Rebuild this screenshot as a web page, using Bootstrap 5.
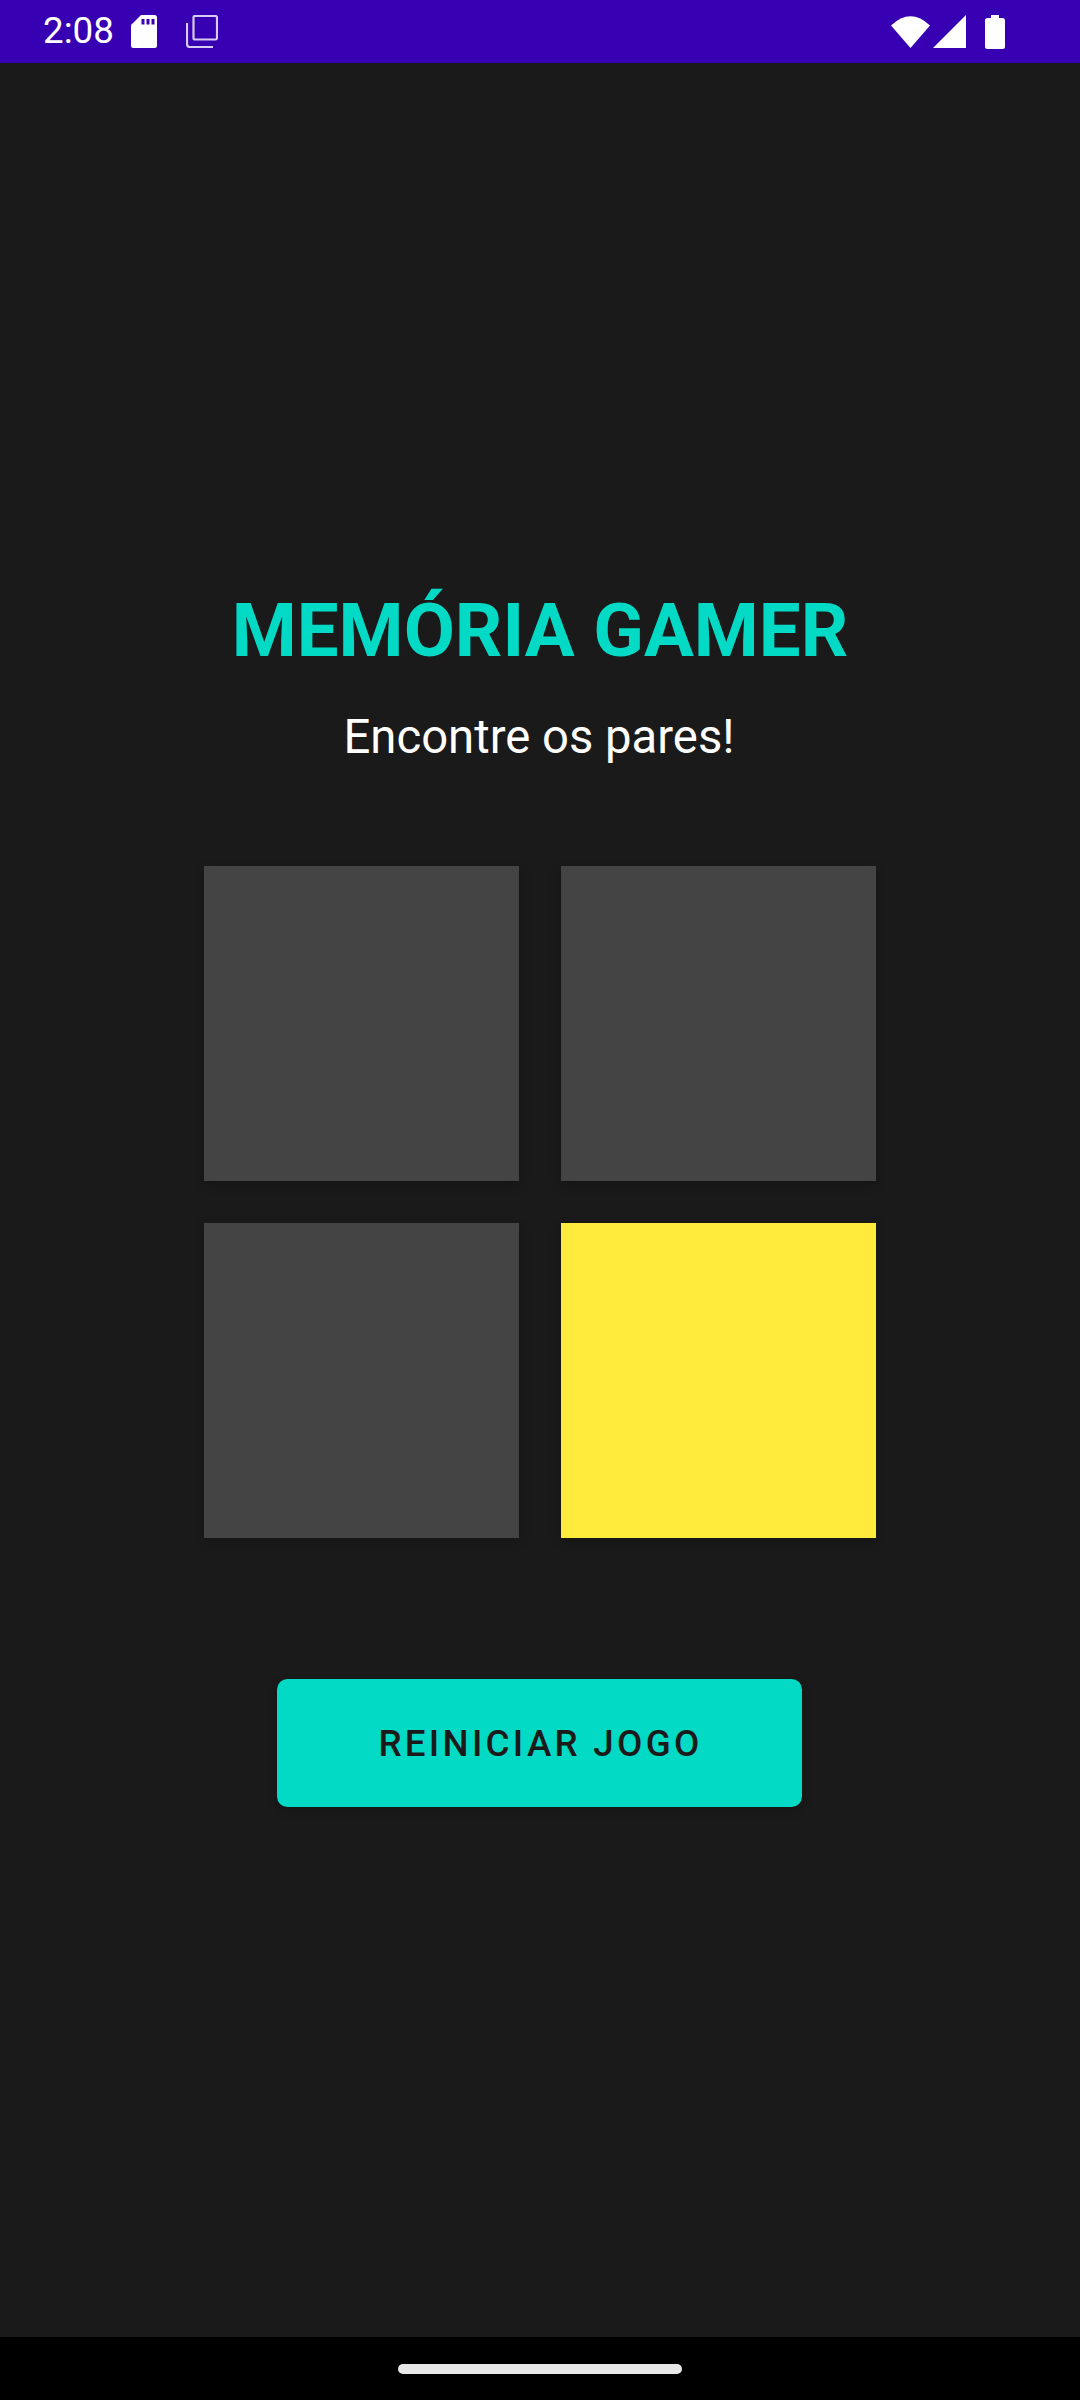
<!DOCTYPE html>
<html lang="pt">
<head>
<meta charset="utf-8">
<title>Memória Gamer</title>
<link href="https://cdn.jsdelivr.net/npm/bootstrap@5.3.0/dist/css/bootstrap.min.css" rel="stylesheet">
<style>
html,body{margin:0;height:2400px;overflow:hidden;background:#1a1a1a;font-family:Roboto,"Liberation Sans",sans-serif}
.app-shell{height:2400px}
.status-strip{height:63px;background:#3700b3;color:#fff;padding:0 75px 0 43px}
.clock{font-size:36.75px;line-height:1;margin-right:17px;letter-spacing:0}
.ico{display:block;fill:#fff;flex:none}
.ico-fade{opacity:.8;margin-left:29px}
.ico-sig{margin-left:3px}
.ico-bat{margin-left:19px}
.game-area{background:#1a1a1a;padding-top:525px}
.game-title{font-size:74.3px;font-weight:700;color:#03dac6;line-height:86px;margin:0}
.game-sub{font-size:47.25px;font-weight:400;color:#fff;line-height:56px;margin:35px 2px 0 0}
.board{margin-top:101px;gap:42px}
.board-row{gap:42px}
.tile{width:315px;height:315px;background:#444;box-shadow:0 3px 10px rgba(0,0,0,.22)}
.tile-on{background:#ffeb3b}
.restart{width:525px;height:128px;margin-top:141px;margin-right:1px;padding:3px 0 0 2px;background:#03dac6;border:0;border-radius:10.5px;color:#1a1a1a;font-size:36.75px;font-weight:500;letter-spacing:3.28px;line-height:1;box-shadow:0 3px 10px rgba(0,0,0,.2)}
.restart:hover,.restart:active{background:#03dac6!important;color:#1a1a1a!important}
.nav-strip{height:63px;background:#000}
.home-pill{width:284px;height:10px;border-radius:5px;background:#e8e8e8;margin-top:27px}
</style>
</head>
<body>
<div class="app-shell d-flex flex-column">
  <div class="status-strip d-flex align-items-center flex-shrink-0">
    <span class="clock">2:08</span>
    <svg class="ico" width="26" height="33" viewBox="0 0 26 33"><path fill-rule="evenodd" d="M10 0H23.5A2.5 2.5 0 0 1 26 2.5V30.5A2.5 2.5 0 0 1 23.5 33H2.5A2.5 2.5 0 0 1 0 30.5V10ZM10.5 4V9.5H13.5V4ZM15.5 4V9.5H18.5V4ZM20.5 4V9.5H23.5V4Z"/></svg>
    <svg class="ico ico-fade" width="32" height="33" viewBox="0 0 32 33" fill="none"><path d="M7.5 2.500A1.500 1.500 0 0 1 9 1H29.500A1.500 1.500 0 0 1 31 2.500V23A1.500 1.500 0 0 1 29.500 24.500H9A1.500 1.500 0 0 1 7.500 23Z" style="fill:none;stroke:#fff;stroke-width:2.200"/><path d="M1 8V29A3 3 0 0 0 4 32H27" style="fill:none;stroke:#fff;stroke-width:2.200"/></svg>
    <div class="flex-grow-1"></div>
    <svg class="ico" width="39" height="32" viewBox="0 0 39 32"><path d="M0 9.500Q19.500 -9 39 9.500L19.500 32Z"/></svg>
    <svg class="ico ico-sig" width="33" height="33" viewBox="0 0 33 33"><path d="M33 0V33H0Z"/></svg>
    <svg class="ico ico-bat" width="20" height="34" viewBox="0 0 20 34"><path d="M6 0H14V3H17.500A2.500 2.500 0 0 1 20 5.500V31.500A2.500 2.500 0 0 1 17.500 34H2.500A2.500 2.500 0 0 1 0 31.500V5.500A2.500 2.500 0 0 1 2.500 3H6Z"/></svg>
  </div>
  <main class="game-area flex-grow-1 d-flex flex-column align-items-center text-center">
    <h1 class="game-title">MEMÓRIA GAMER</h1>
    <p class="game-sub">Encontre os pares!</p>
    <div class="board d-flex flex-column">
      <div class="board-row d-flex"><div class="tile"></div><div class="tile"></div></div>
      <div class="board-row d-flex"><div class="tile"></div><div class="tile tile-on"></div></div>
    </div>
    <button type="button" class="btn restart">REINICIAR JOGO</button>
  </main>
  <div class="nav-strip d-flex justify-content-center flex-shrink-0"><div class="home-pill"></div></div>
</div>
<script src="https://cdn.jsdelivr.net/npm/bootstrap@5.3.0/dist/js/bootstrap.bundle.min.js"></script>
</body>
</html>
